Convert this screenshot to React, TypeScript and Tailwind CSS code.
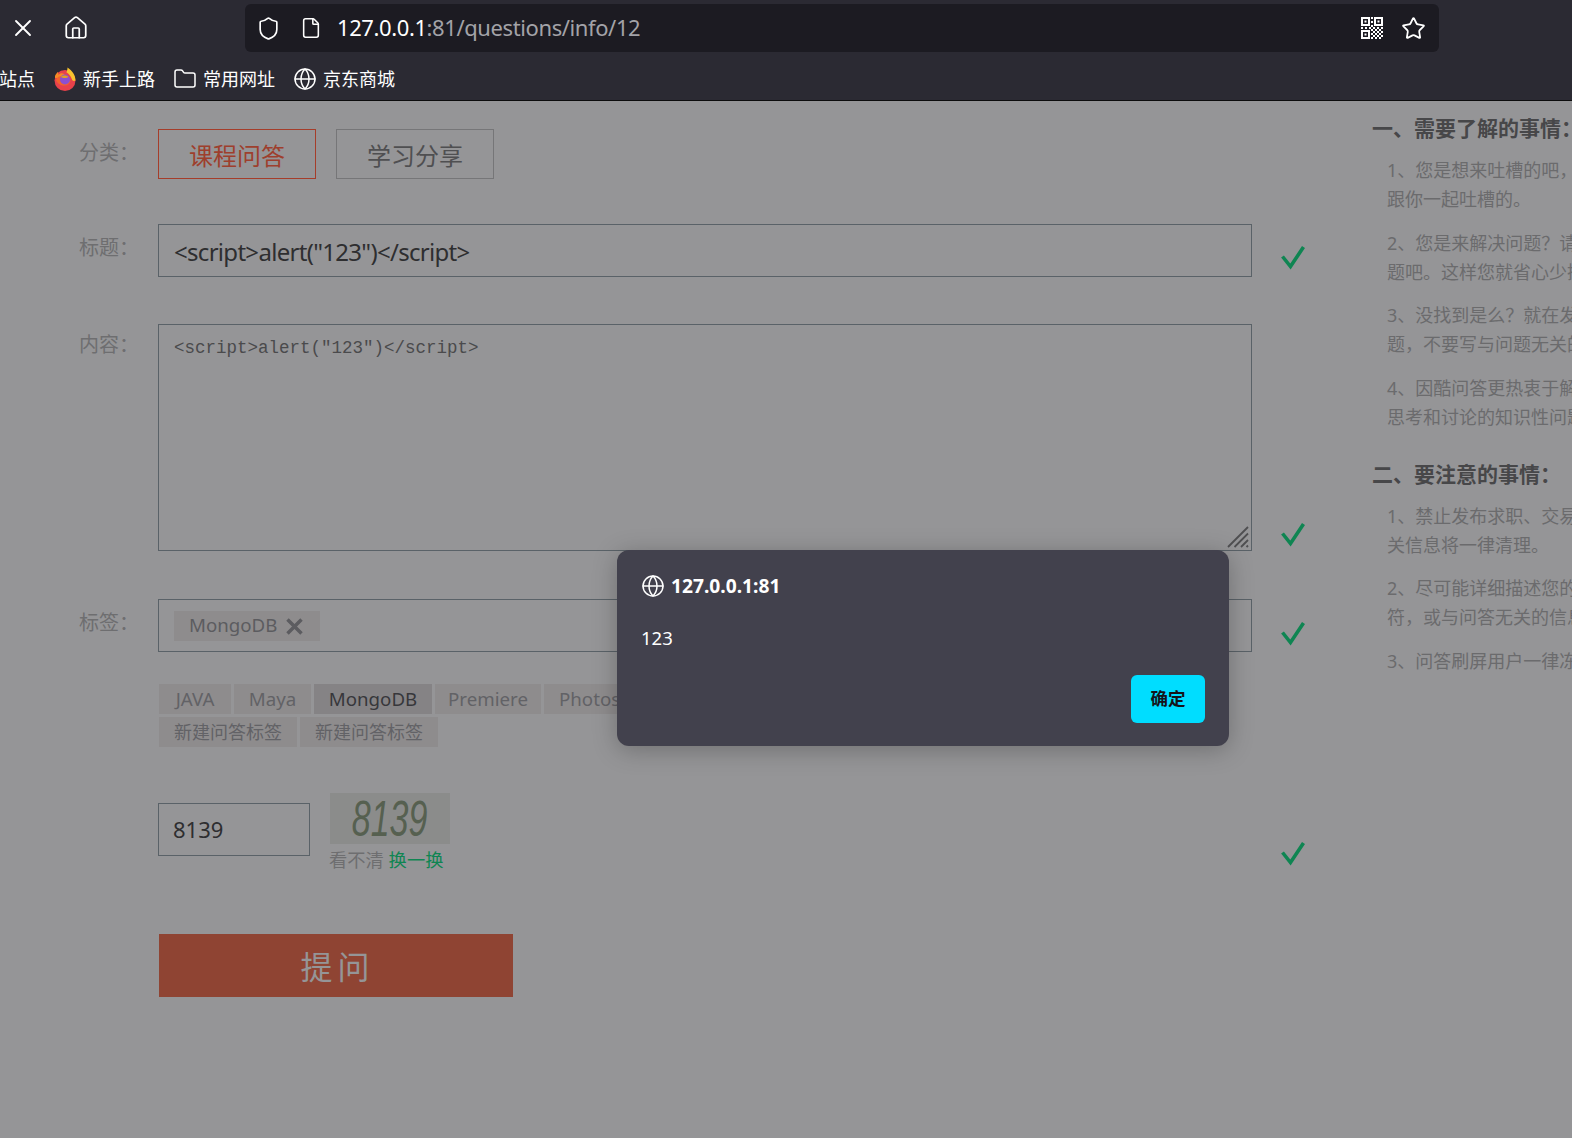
import React from 'react'
import { X, Home, Shield, File, Folder, Globe, Star } from 'lucide-react'

const FONT = "font-['Noto_Sans','Noto_Sans_CJK_SC',sans-serif]"

const FirefoxLogo = () => (
  <svg width="24" height="24" viewBox="0 0 24 24">
    <circle cx="12" cy="13.500" r="10.500" fill="#e8414a" />
    <path d="M2 9c1-2 2-3.500 3-4l.5 3C7 6 9.500 6 11 7l3 4H2z" fill="#f58a26" />
    <path d="M14.500 0.500c4.500 3 8 7.500 8 13-1 .5-2 .5-3 0C18 9 15 6 13.500 5.500c.5-1.500 1-3 1-5z" fill="#f9c22e" />
    <path d="M3 13c.5-2.500 3-4 6-4 4 0 7.500 1.500 8.500 5-1 3-3 4.500-6 4.500-4 0-7.500-2-8.500-5.500z" fill="#f2622e" />
    <circle cx="12" cy="12.500" r="5" fill="#8c4fd0" />
    <path d="M8 10c2-2 5.500-2 7.500 0-1.500.8-2.500 1-3.500 1-1.500 0-3-.2-4-1z" fill="#e3a21f" />
  </svg>
)

const QrIcon = () => (
  <svg width="22" height="22" viewBox="0 0 22 22" fill="#fff" fillRule="evenodd">
    <path d="M0 0h9v9H0zM2 2v5h5V2zM13 0h9v9h-9zM15 2v5h5V2zM0 13h9v9H0zM2 15v5h5v-5z" />
    <path d="M3.500 3.500h2v2h-2zM16.500 3.500h2v2h-2zM3.500 16.500h2v2h-2z" />
    <path d="M10 0h2v2h-2zM10 4h2v2h-2zM10 8h2v2h-2zM8 10h2v2H8zM4 10h2v2H4zM0 10h2v2H0zM12 10h2v2h-2zM16 10h2v2h-2zM20 10h2v2h-2zM10 12h2v2h-2zM14 12h2v2h-2zM18 12h2v2h-2zM10 16h2v2h-2zM14 16h2v2h-2zM18 16h2v2h-2zM12 14h2v2h-2zM16 14h2v2h-2zM20 14h2v2h-2zM12 18h2v2h-2zM16 18h2v2h-2zM20 18h2v2h-2zM10 20h2v2h-2zM14 20h2v2h-2zM18 20h2v2h-2z" />
  </svg>
)

const Ok = () => (
  <svg width="24" height="24" viewBox="0 0 24 24" fill="none" stroke="#0f8552" strokeWidth="3.600">
    <path d="M1.500 10.500 9.500 20.500 22.500 1" />
  </svg>
)

const bookmarks = [
  { icon: <FirefoxLogo />, label: '新手上路' },
  { icon: <Folder className="w-6 h-6" strokeWidth={1.5} />, label: '常用网址' },
  { icon: <Globe className="w-6 h-6" strokeWidth={1.5} />, label: '京东商城' },
]

const tags = [
  { name: 'JAVA', cls: 'w-[72px] justify-center' },
  { name: 'Maya', cls: 'w-[77px] justify-center' },
  { name: 'MongoDB', cls: 'w-[118px] justify-center bg-[#858385] text-[#37373b]' },
  { name: 'Premiere', cls: 'w-[106px] justify-center' },
  { name: 'Photoshop', cls: 'px-[15px]' },
]

const notes = [
  {
    title: '一、需要了解的事情：',
    items: [
      ['1、您是想来吐槽的吧，', '跟你一起吐槽的。'],
      ['2、您是来解决问题？请', '题吧。这样您就省心少操'],
      ['3、没找到是么？就在发', '题，不要写与问题无关的'],
      ['4、因酷问答更热衷于解', '思考和讨论的知识性问题'],
    ],
  },
  {
    title: '二、要注意的事情：',
    items: [
      ['1、禁止发布求职、交易', '关信息将一律清理。'],
      ['2、尽可能详细描述您的', '符，或与问答无关的信息'],
      ['3、问答刷屏用户一律冻'],
    ],
  },
]

const Toolbar = () => (
  <div className="h-[101px] bg-[#2b2a33] border-b border-[#0c0c0d] text-white">
    <div className="flex items-center h-[56px]">
      <X className="w-7 h-7 ml-[9px]" strokeWidth={1.6} />
      <Home className="w-[26px] h-[26px] ml-[26px]" strokeWidth={1.6} />
      <div className="flex items-center ml-[156px] w-[1194px] h-[48px] bg-[#1c1b22] rounded-md">
        <Shield className="w-[25px] h-[25px] ml-[11px]" strokeWidth={1.6} />
        <File className="w-[22px] h-[22px] ml-[19px]" strokeWidth={1.7} />
        <div className="ml-[15px] -mt-[1px] text-[22px] tracking-[-0.4px]">
          127.0.0.1<span className="text-[#a3a3a8]">:81/questions/info/12</span>
        </div>
        <div className="ml-auto mr-[13px] flex items-center gap-[18px]">
          <QrIcon />
          <Star className="w-[25px] h-[25px]" strokeWidth={1.7} />
        </div>
      </div>
    </div>
    <div className="flex items-center h-[46px] -ml-[1px] gap-[18px] text-[18px]">
      <span>站点</span>
      {bookmarks.map((b) => (
        <div key={b.label} className="flex items-center gap-[6px]">
          {b.icon}
          <span>{b.label}</span>
        </div>
      ))}
    </div>
  </div>
)

const FieldRow = ({ label, children, check, labelClass = 'leading-[48px]' }: { label: string; children: React.ReactNode; check?: string; labelClass?: string }) => (
  <div className="flex items-start">
    <div className={`w-[79px] -ml-[1px] text-[20px] text-[#6e6e70] ${labelClass}`}>{label}</div>
    <div className="w-[1094px]">{children}</div>
    {check && <div className={`ml-[29px] ${check}`}><Ok /></div>}
  </div>
)

const chip = 'h-[30px] flex items-center bg-[#8e8c8d]'

export default function App() {
  return (
    <div className={`relative w-[1572px] h-[1138px] overflow-hidden bg-[#959597] ${FONT}`}>
      <Toolbar />

      <div className="flex">
        {/* form */}
        <div className="pl-[80px] pt-[28px] w-[1372px] shrink-0">
          <FieldRow label="分类：">
            <div className="flex gap-[20px] text-[24px]">
              <div className="w-[158px] h-[50px] pt-[3px] flex items-center justify-center border border-[#a53d2a] text-[#9e3f2d]">课程问答</div>
              <div className="w-[158px] h-[50px] pt-[3px] flex items-center justify-center border border-[#767678] text-[#4f4f51]">学习分享</div>
            </div>
          </FieldRow>

          <div className="mt-[45px]">
            <FieldRow label="标题：" check="mt-[22px]">
              <div className="h-[53px] flex items-center pl-[15px] pt-[2px] border border-[#5a6268] text-[24px] tracking-[-0.7px] text-[#2e2e30]">
                {'<script>alert("123")</script>'}
              </div>
            </FieldRow>
          </div>

          <div className="mt-[47px]">
            <FieldRow label="内容：" check="mt-[199px]" labelClass="leading-[42px]">
              <div className="relative flex">
                <textarea
                  readOnly
                  defaultValue={'<script>alert("123")</script>'}
                  className="w-[1094px] h-[227px] resize-none px-[15px] py-[10px] border border-[#5a6268] bg-transparent outline-none font-['Liberation_Mono',monospace] text-[17.500px] text-[#4a4a4c]"
                />
                <svg className="absolute right-[3px] bottom-[3px]" width="22" height="22" viewBox="0 0 22 22" stroke="#4f4f51" strokeWidth="1.800">
                  <path d="M1 21 21 1M7.500 21 21 7.500M14 21l7-7M19.500 21l1.500-1.500" />
                </svg>
              </div>
            </FieldRow>
          </div>

          <div className="mt-[48px]">
            <FieldRow label="标签：" check="mt-[23px]">
              <div className="h-[53px] flex items-center px-[15px] border border-[#5a6268]">
                <div className="flex items-center gap-[9px] h-[30px] w-[146px] pl-[15px] bg-[#8e8c8d] text-[18.700px] text-[#5c5c60]">
                  MongoDB
                  <svg className="mt-[2px]" width="17" height="17" viewBox="0 0 17 17" stroke="#5c5c60" strokeWidth="3.500">
                    <path d="M1.500 1.500l14 14M15.500 1.500l-14 14" />
                  </svg>
                </div>
              </div>
            </FieldRow>
          </div>

          <div className="ml-[79px] mt-[32px] flex flex-col gap-[3px] text-[#626266]">
            <div className="flex gap-[3px] text-[18.700px]">
              {tags.map((t) => (
                <div key={t.name} className={`${chip} ${t.cls}`}>{t.name}</div>
              ))}
            </div>
            <div className="flex gap-[3px] text-[18px]">
              <div className={`${chip} px-[15px]`}>新建问答标签</div>
              <div className={`${chip} px-[15px]`}>新建问答标签</div>
            </div>
          </div>

          <div className="ml-[78px] mt-[46px] flex items-start">
            <div className="mt-[10px] w-[152px] h-[53px] flex items-center px-[14px] border border-[#5a6268] text-[22px] text-[#2e2e30]">8139</div>
            <div className="ml-[20px] w-[120px]">
              <div className="h-[51px] bg-[#8b8c8b] flex items-center justify-center">
                <span className="font-['Liberation_Sans',sans-serif] italic text-[50px] leading-none scale-x-[0.68] text-[#566050]">8139</span>
              </div>
              <div className="mt-[2px] -ml-[1px] text-[18.300px] whitespace-nowrap text-[#6e6e70]">看不清 <span className="text-[#0f8552]">换一换</span></div>
            </div>
            <div className="ml-[831px] mt-[49px]"><Ok /></div>
          </div>

          <div className="ml-[79px] mt-[61px] w-[354px] h-[63px] pl-[3px] pt-[2px] bg-[#8f4433] flex items-center justify-center text-[32px] tracking-[5px] text-[#959597]">提问</div>
        </div>

        {/* notes */}
        <div className="pt-[11px] whitespace-nowrap">
          {notes.map((n) => (
            <div key={n.title} className="mb-[26px]">
              <div className="text-[21px] leading-[32px] font-bold text-[#474749]">{n.title}</div>
              {n.items.map((lines, i) => (
                <div key={lines[0]} className={`ml-[15px] text-[18px] leading-[29px] text-[#6b6b6d] ${i === 0 ? 'mt-[12px]' : 'mt-[14.500px]'}`}>
                  {lines.map((l) => <div key={l}>{l}</div>)}
                </div>
              ))}
            </div>
          ))}
        </div>
      </div>

      {/* alert dialog */}
      <div className="absolute left-[617px] top-[550px] w-[612px] h-[196px] rounded-xl bg-[#42414d] shadow-[0_4px_24px_rgba(0,0,0,0.25)] text-white">
        <div className="flex items-center gap-[6px] ml-[24px] mt-[22px] text-[19.200px] font-bold">
          <Globe className="w-6 h-6" strokeWidth={1.5} />
          127.0.0.1:81
        </div>
        <div className="ml-[24px] mt-[23px] text-[18.500px] leading-[28px]">123</div>
        <div className="absolute right-[24px] bottom-[23px] w-[74px] h-[48px] pb-[2px] rounded-md bg-[#00ddff] text-[#15141a] flex items-center justify-center text-[17.500px] font-bold">确定</div>
      </div>
    </div>
  )
}
